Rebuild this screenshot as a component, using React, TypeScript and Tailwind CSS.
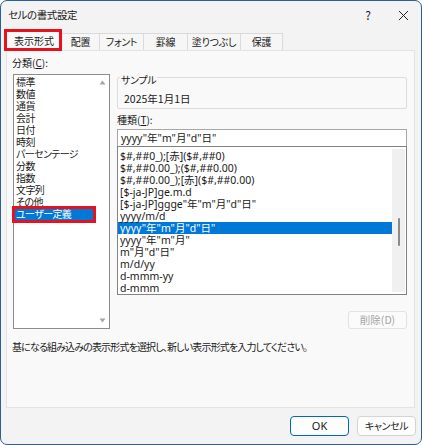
import React from "react";

const leftItems = [
  "標準",
  "数値",
  "通貨",
  "会計",
  "日付",
  "時刻",
  "パーセンテージ",
  "分数",
  "指数",
  "文字列",
  "その他",
  "ユーザー定義",
];

const rightItems = [
  '$#,##0_);[赤]($#,##0)',
  '$#,##0.00_);($#,##0.00)',
  '$#,##0.00_);[赤]($#,##0.00)',
  "[$-ja-JP]ge.m.d",
  '[$-ja-JP]ggge"年"m"月"d"日"',
  "yyyy/m/d",
  'yyyy"年"m"月"d"日"',
  'yyyy"年"m"月"',
  'm"月"d"日"',
  "m/d/yy",
  "d-mmm-yy",
  "d-mmm",
];

const tabs = [
  { label: "配置", w: "w-[38px]" },
  { label: "フォント", w: "w-[44px]" },
  { label: "罫線", w: "w-[44px]" },
  { label: "塗りつぶし", w: "w-[53px]" },
  { label: "保護", w: "w-[42px]" },
];

export default function App() {
  return (
    <div className="w-[422px] h-[445px] bg-[#f3f3f3] border border-[#2d5f97] rounded-[7px] flex flex-col font-['Noto_Sans_CJK_JP','Noto_Sans',sans-serif] [font-feature-settings:'palt'] text-[10px] leading-[12px] text-[#1a1a1a] overflow-hidden">
      {/* title bar */}
      <div className="h-[28px] flex items-center pl-[7px] pr-[11px]">
        <span className="text-[10.5px] tracking-[-0.4px]">セルの書式設定</span>
        <span className="ml-auto text-[12px] w-[10px] text-center mr-[25px]">?</span>
        <svg width="11" height="11" viewBox="0 0 11 11" className="mr-[1px]">
          <path d="M1 1L10 10M10 1L1 10" stroke="#222" strokeWidth="1" />
        </svg>
      </div>

      {/* tabs */}
      <div className="h-[21px] flex items-end pl-[5px]">
        <div className="relative w-[56px] h-[19px] bg-[#f9f9f9] border border-b-0 border-[#e0e0e0] flex items-center justify-center text-[10px] z-10">
          表示形式
          <div className="absolute left-[-3px] top-[-3px] w-[58px] h-[22px] border-[3px] border-[#e8121c]" />
        </div>
        {tabs.map((t) => (
          <div
            key={t.label}
            className={`${t.w} h-[17px] bg-[#f6f6f6] border border-l-0 border-b-0 border-[#dadada] flex items-center justify-center text-[10px] tracking-[-0.3px]`}
          >
            {t.label}
          </div>
        ))}
      </div>

      {/* panel */}
      <div className="ml-[5px] mr-[6px] h-[358px] bg-[#f9f9f9] border border-[#e3e3e3] flex flex-col">
        <div className="flex">
          {/* left column */}
          <div className="flex flex-col pl-[5px] pt-[6px]">
            <div className="text-[10px]">
              分類(<span className="underline">C</span>):
            </div>
            <div className="mt-[5px] ml-[1px] w-[97px] h-[255px] bg-white border border-[#8c8c8c] flex">
              <div className="w-[82px] pt-[1px] pl-[1px]">
                {leftItems.map((it) => (
                  <div
                    key={it}
                    className={`relative h-[12px] pl-[1px] whitespace-nowrap tracking-[-0.6px] ${
                      it === "ユーザー定義" ? "bg-[#0078d7] text-white" : ""
                    }`}
                  >
                    {it}
                    {it === "ユーザー定義" && (
                      <div className="absolute left-[-3px] top-[-2px] w-[84px] h-[17px] border-[3px] border-[#e8121c]" />
                    )}
                  </div>
                ))}
              </div>
              <div className="flex-1 flex flex-col items-center justify-between pt-[5px] pb-[5px]">
                <svg width="7" height="5" viewBox="0 0 7 5">
                  <path d="M3.5 0.5L6.5 4.5H0.5Z" fill="#a6a6a6" />
                </svg>
                <svg width="7" height="5" viewBox="0 0 7 5">
                  <path d="M0.5 0.5H6.5L3.5 4.5Z" fill="#a6a6a6" />
                </svg>
              </div>
            </div>
          </div>

          {/* right column */}
          <div className="ml-[7px] w-[290px] flex flex-col">
            <div className="relative mt-[26px] h-[32px] border border-[#dcdcdc] rounded-[2px]">
              <span className="absolute left-[2px] top-[-4px] px-[1px] bg-[#f9f9f9] text-[10px] tracking-[-0.3px]">
                サンプル
              </span>
              <div className="pl-[6px] pt-[15px] text-[10.5px]">2025年1月1日</div>
            </div>
            <div className="mt-[5px] text-[10px]">
              種類(<span className="underline">T</span>):
            </div>
            <div className="mt-[3px] h-[17px] bg-white border border-[#a8a8a8] border-b-0 pl-[3px] flex items-center text-[10.5px] font-['Noto_Sans','Noto_Sans_CJK_JP',sans-serif]">
              yyyy"年"m"月"d"日"
            </div>
            <div className="h-[149px] bg-white border border-[#828282] flex">
              <div className="flex-1 pt-[3px] font-['Noto_Sans','Noto_Sans_CJK_JP',sans-serif]">
                {rightItems.map((it) => (
                  <div
                    key={it}
                    className={`h-[12px] pl-[2px] whitespace-nowrap text-[10.5px] ${
                      it === 'yyyy"年"m"月"d"日"' ? "bg-[#0078d7] text-white" : ""
                    }`}
                  >
                    {it}
                  </div>
                ))}
              </div>
              <div className="w-[13px] my-[2px] mr-[1px] bg-[#f0f0f0] flex flex-col items-center">
                <div className="mt-[69px] ml-[1px] w-[2px] h-[28px] bg-[#8a8a8a] rounded-[1px]" />
              </div>
            </div>
            <div className="mt-[16px] self-end w-[59px] h-[18px] bg-[#fbfbfb] border border-[#e2e2e2] rounded-[3px] flex items-center justify-center text-[#a3a3a3] text-[10.5px]">
              削除(D)
            </div>
          </div>
        </div>
        <div className="mt-[12px] pl-[5px] text-[10px] tracking-[-0.85px]">
          基になる組み込みの表示形式を選択し、新しい表示形式を入力してください。
        </div>
      </div>

      {/* buttons */}
      <div className="mt-[8px] flex justify-end gap-[8px] pr-[5px]">
        <div className="w-[59px] h-[20px] bg-[#fdfdfd] border border-[#0067c0] rounded-[4px] flex items-center justify-center text-[11px] font-['Noto_Sans',sans-serif]">
          OK
        </div>
        <div className="w-[59px] h-[20px] bg-[#fdfdfd] border border-[#d4d4d4] rounded-[4px] flex items-center justify-center text-[10px] tracking-[-0.4px]">
          キャンセル
        </div>
      </div>
    </div>
  );
}
